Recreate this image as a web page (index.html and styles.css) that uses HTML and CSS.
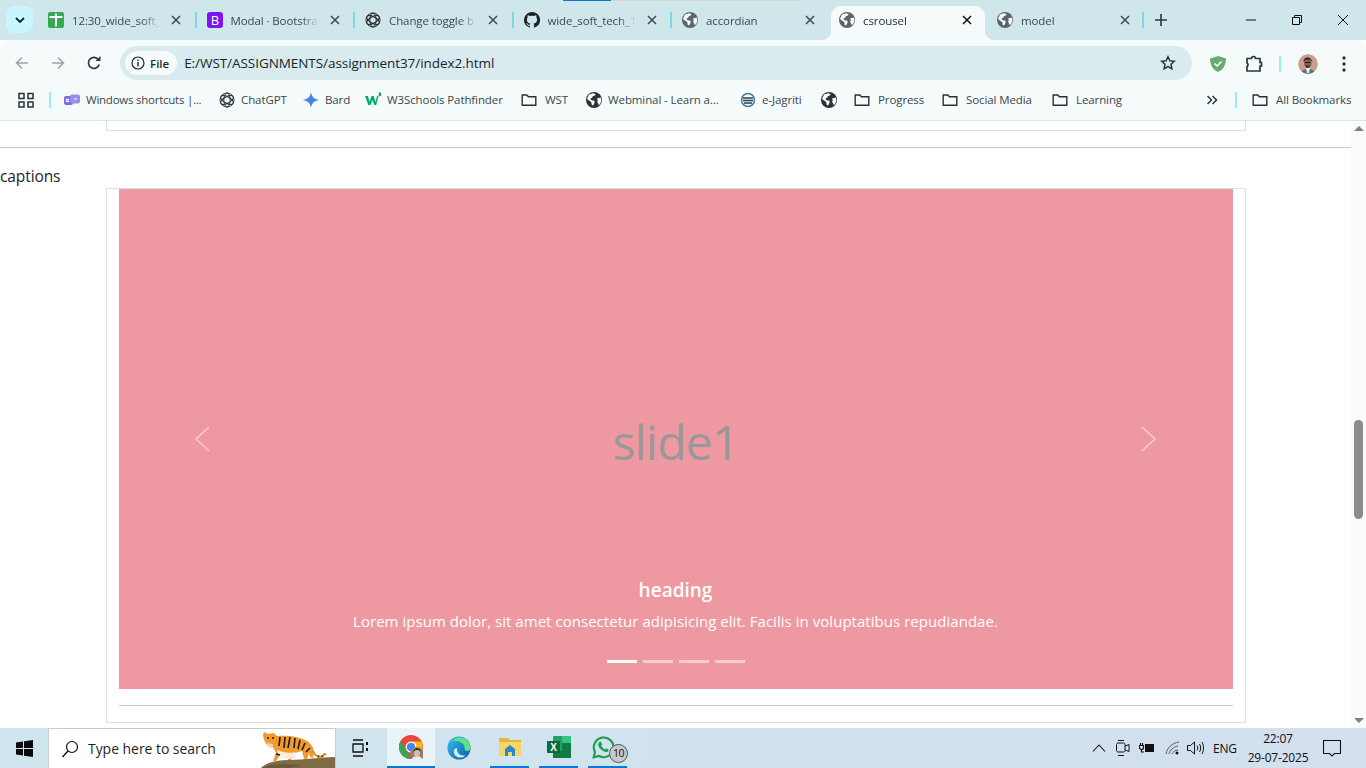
FILE: index.html
```html
<!DOCTYPE html>
<html lang="en">
<head>
<meta charset="utf-8">
<title>csrousel</title>
<link rel="stylesheet" href="styles.css">
</head>
<body>
<svg class="defs" width="0" height="0" aria-hidden="true">
  <symbol id="globe" viewBox="0 0 16 16"><circle cx="8" cy="8" r="8" fill="currentColor"/><path fill="#f5fbfb" d="M3 2.600 7 1.200l2.600.8-.8 1.600-2 .6-.6 1.600-1.400.4-.2 1.400 1.800 1 1.600-.2.8 1.400-.8 2.200-1 1.400-1.200-.4-.6-3L2.200 8 1 6.800zM11 6.600l3.800-1 .6 3-1 3-1.600 1.600-.8-2-1-1.400.8-1.200z"/></symbol>
  <symbol id="folder" viewBox="0 0 16 16"><path fill="none" stroke="currentColor" stroke-width="1.400" d="M1.200 3h4.600l1.600 1.800h7.400v8.400H1.200z"/></symbol>
  <symbol id="gpt" viewBox="0 0 16 16"><g fill="none" stroke="currentColor"><ellipse cx="8" cy="8" rx="3.200" ry="7"/><ellipse cx="8" cy="8" rx="3.200" ry="7" transform="rotate(60 8 8)"/><ellipse cx="8" cy="8" rx="3.200" ry="7" transform="rotate(120 8 8)"/><circle cx="8" cy="8" r="7"/></g></symbol>
  <symbol id="x" viewBox="0 0 10 10"><path stroke="currentColor" stroke-width="1.500" d="M1 1l8 8M9 1l-8 8"/></symbol>
</svg>

<header class="tabstrip">
  <span class="progress"></span>
  <button class="tab-search"><svg width="10" height="6" viewBox="0 0 10 6"><path fill="none" stroke="#10242b" stroke-width="1.800" d="M1 1l4 4 4-4"/></svg></button>
  <div class="tabs">
    <div class="tab"><svg class="fav" viewBox="0 0 16 16"><rect width="16" height="16" rx="2" fill="#34a853"/><path fill="#fff" d="M7 1.500h2V4h5.500v2H9v8.500H7V6H1.500V4H7z"/></svg><span class="tab-title">12:30_wide_soft_</span><svg class="close"><use href="#x"/></svg></div>
    <div class="tab"><svg class="fav" viewBox="0 0 16 16"><rect width="16" height="16" rx="3" fill="#7a14f0"/><text x="8" y="12.800" class="b-letter">B</text></svg><span class="tab-title">Modal · Bootstra</span><svg class="close"><use href="#x"/></svg></div>
    <div class="tab"><svg class="fav dark"><use href="#gpt"/></svg><span class="tab-title">Change toggle b</span><svg class="close"><use href="#x"/></svg></div>
    <div class="tab"><svg class="fav" viewBox="0 0 16 16"><path fill="#1f2328" d="M8 0a8 8 0 0 0-2.500 15.600c.4.100.5-.2.5-.4v-1.400c-2.200.5-2.700-1-2.700-1-.4-.9-.9-1.200-.9-1.200-.7-.5 0-.5 0-.5.8.1 1.200.8 1.200.8.7 1.200 1.900.9 2.400.7.1-.5.3-.9.5-1.100-1.800-.2-3.600-.9-3.600-4 0-.9.3-1.600.8-2.100-.1-.2-.4-1 .1-2.100 0 0 .7-.2 2.200.8a7.600 7.600 0 0 1 4 0c1.500-1 2.200-.8 2.200-.8.400 1.100.2 1.900.1 2.100.5.600.8 1.300.8 2.100 0 3.100-1.900 3.800-3.700 4 .3.300.6.800.6 1.500v2.200c0 .2.100.5.600.4A8 8 0 0 0 8 0z"/></svg><span class="tab-title">wide_soft_tech_1</span><svg class="close"><use href="#x"/></svg></div>
    <div class="tab last-before-active"><svg class="fav grey"><use href="#globe"/></svg><span class="tab-title">accordian</span><svg class="close"><use href="#x"/></svg></div>
    <div class="tab active"><svg class="fav grey"><use href="#globe"/></svg><span class="tab-title">csrousel</span><svg class="close"><use href="#x"/></svg></div>
    <div class="tab after-active"><svg class="fav grey"><use href="#globe"/></svg><span class="tab-title">model</span><svg class="close"><use href="#x"/></svg></div>
  </div>
  <button class="new-tab"><svg width="12" height="12" viewBox="0 0 12 12"><path stroke="#26383e" stroke-width="1.600" d="M6 0v12M0 6h12"/></svg></button>
  <div class="win-controls">
    <svg width="12" height="12" viewBox="0 0 12 12"><path stroke="#111" d="M1 6h10"/></svg>
    <svg width="12" height="12" viewBox="0 0 12 12"><path fill="none" stroke="#111" d="M1.500 3.500h7v7h-7zM3.500 3.500v-2h7v7h-2"/></svg>
    <svg width="12" height="12" viewBox="0 0 12 12"><path stroke="#111" d="M1 1l10 10M11 1L1 11"/></svg>
  </div>
</header>

<div class="toolbar">
  <div class="nav">
    <svg width="16" height="16" viewBox="0 0 16 16"><path fill="none" stroke="#9aa5a8" stroke-width="1.600" d="M14 8H2.500M8 2.500 2.500 8 8 13.500"/></svg>
    <svg width="16" height="16" viewBox="0 0 16 16"><path fill="none" stroke="#9aa5a8" stroke-width="1.600" d="M2 8h11.500M8 2.500 13.500 8 8 13.500"/></svg>
    <svg width="16" height="16" viewBox="0 0 16 16"><path fill="none" stroke="#26383e" stroke-width="1.700" d="M13.200 9.500A5.500 5.500 0 1 1 12 4.200"/><path fill="#26383e" d="M9.500 6h5V1z"/></svg>
  </div>
  <div class="omnibox">
    <span class="chip"><svg width="14" height="14" viewBox="0 0 14 14"><circle cx="7" cy="7" r="6" fill="none" stroke="#1b2c31" stroke-width="1.200"/><path stroke="#1b2c31" stroke-width="1.400" d="M7 6v4.500M7 3.500v1.400"/></svg>File</span>
    <span class="url">E:/WST/ASSIGNMENTS/assignment37/index2.html</span>
    <svg class="star" width="16" height="16" viewBox="0 0 16 16"><path fill="none" stroke="#26383e" stroke-width="1.500" d="M8 1.800l1.900 4 4.400.5-3.300 3 .9 4.400L8 11.500l-3.900 2.200.9-4.400-3.300-3 4.400-.5z"/></svg>
  </div>
  <div class="extras">
    <svg width="16" height="18" viewBox="0 0 16 18"><path fill="#68ad6f" d="M8 1l8 2.500C16 10 13 15 8 17 3 15 0 10 0 3.500z"/><path fill="none" stroke="#fff" stroke-width="1.600" d="M4.500 8.500 7.200 11l4.300-4.500"/></svg>
    <svg width="18" height="18" viewBox="0 0 18 18"><path fill="none" stroke="#26383e" stroke-width="1.700" d="M2 3.500h4.500a2 2 0 0 1 4 0H15v4h1.500v3.500H15v5H2v-4.500a2 2 0 0 0 0-3.500z"/></svg>
    <span class="vsep"></span>
    <span class="avatar"><svg width="20" height="20" viewBox="0 0 20 20"><circle cx="10" cy="10" r="10" fill="#c9a08c"/><path fill="#5d7480" d="M3 18c2-4 12-4 14 0l-3 3H6z"/><path fill="#e8edf0" d="M8 14h4l-1 5H9z"/><ellipse cx="9.800" cy="9" rx="3.800" ry="4.800" fill="#84624c"/><path fill="#2a221d" d="M5.500 8c-.5-6 8.500-6 8.800 0L12.500 5.500H7.500z"/><path stroke="#1d1a18" d="M7 8.500h5.500"/><path fill="#3b2c24" d="M7.500 11.500h4.500l-1 2.200H8.500z"/></svg></span>
    <svg width="4" height="16" viewBox="0 0 4 16"><g fill="#26383e"><circle cx="2" cy="2" r="1.700"/><circle cx="2" cy="8" r="1.700"/><circle cx="2" cy="14" r="1.700"/></g></svg>
  </div>
</div>

<nav class="bookmarks">
  <span class="bm"><svg class="ic dark" viewBox="0 0 16 16"><path fill="none" stroke="currentColor" stroke-width="1.500" d="M1 1.500h5v5H1zM10 1.500h5v5h-5zM1 10h5v5H1zM10 10h5v5h-5z"/></svg></span>
  <span class="vsep"></span>
  <span class="bm tight"><svg class="ic" viewBox="0 0 16 16"><rect x="0" y="4" width="9" height="9" rx="2" fill="#7d6be0"/><rect x="6" y="2.500" width="10" height="9" rx="2" fill="#9a8bec"/><path stroke="#fff" stroke-width="1.200" d="M2 7l3 3M5 7l-3 3M10 7h3"/></svg>Windows shortcuts |...</span>
  <span class="bm"><svg class="ic dark"><use href="#gpt"/></svg>ChatGPT</span>
  <span class="bm"><svg class="ic" viewBox="0 0 16 16"><path fill="#4a82e8" d="M8 0c.6 4.500 3 7.200 8 8-5 .8-7.400 3.500-8 8-.6-4.500-3-7.200-8-8 5-.8 7.400-3.500 8-8z"/></svg>Bard</span>
  <span class="bm"><svg class="ic" viewBox="0 0 16 16"><path fill="#04aa6d" d="M0 4h3l1.500 6L6.500 4h2.200l1.800 6L12 4h1.500l-2.300 9H9.300L7.500 8l-1.900 5H3.300z"/><path fill="none" stroke="#0a7a50" d="M13.500 1h2v1.200h-1.500M15.500 2.200v1.500h-2"/></svg>W3Schools Pathfinder</span>
  <span class="bm gap8"><svg class="ic dark"><use href="#folder"/></svg>WST</span>
  <span class="bm"><svg class="ic dark"><use href="#globe"/></svg>Webminal - Learn a...</span>
  <span class="bm"><svg class="ic" viewBox="0 0 16 16"><circle cx="8" cy="8" r="6.500" fill="none" stroke="#4a7c9c" stroke-width="1.500"/><path stroke="#2d3e50" stroke-width="1.300" d="M3 6h10M3 8.500h10M4 11h8"/></svg>e-Jagriti</span>
  <span class="bm"><svg class="ic dark"><use href="#globe"/></svg></span>
  <span class="bm gap8"><svg class="ic dark"><use href="#folder"/></svg>Progress</span>
  <span class="bm gap8"><svg class="ic dark"><use href="#folder"/></svg>Social Media</span>
  <span class="bm gap8"><svg class="ic dark"><use href="#folder"/></svg>Learning</span>
  <span class="bm chev"><svg width="12" height="10" viewBox="0 0 12 10"><path fill="none" stroke="#26383e" stroke-width="1.500" d="M1.500 1l4 4-4 4M6.500 1l4 4-4 4"/></svg></span>
  <span class="vsep"></span>
  <span class="bm gap8"><svg class="ic dark"><use href="#folder"/></svg>All Bookmarks</span>
</nav>

<div class="viewport">
  <main class="page">
    <div class="container stub"></div>
    <hr class="rule">
    <p class="label">captions</p>
    <section class="container card">
      <div class="carousel">
        <div class="slide">slide1</div>
        <span class="control prev"><svg width="16" height="26" viewBox="0 0 16 26"><path fill="none" stroke="#fff" stroke-width="1.600" d="M15 1 2 13l13 12"/></svg></span>
        <span class="control next"><svg width="16" height="26" viewBox="0 0 16 26"><path fill="none" stroke="#fff" stroke-width="1.600" d="M1 1l13 12L1 25"/></svg></span>
        <div class="caption">
          <h5>heading</h5>
          <p>Lorem ipsum dolor, sit amet consectetur adipisicing elit. Facilis in voluptatibus repudiandae.</p>
        </div>
        <div class="indicators"><span class="on"></span><span></span><span></span><span></span></div>
      </div>
      <hr class="rule inner">
    </section>
  </main>
  <aside class="scrollbar">
    <span class="arrow up"></span>
    <span class="thumb"></span>
    <span class="arrow down"></span>
  </aside>
</div>

<footer class="taskbar">
  <span class="start"><svg width="17" height="17" viewBox="0 0 17 17"><path fill="#0b0b0b" d="M0 2.400 7 1.400V8H0zM8 1.300 17 0v8H8zM0 9h7v6.600l-7-1zM8 9h9v8l-9-1.300z"/></svg></span>
  <div class="search">
    <svg width="18" height="18" viewBox="0 0 18 18"><circle cx="11" cy="7" r="5.500" fill="none" stroke="#111" stroke-width="1.200"/><path stroke="#111" stroke-width="1.400" d="M7 11l-5.500 6"/></svg>
    <span class="search-text">Type here to search</span>
    <svg class="tiger" width="80" height="38" viewBox="0 0 80 38"><path fill="#7d6b45" d="M5 38c6-6 16-8 28-8 16 0 32-3 47-3v11z"/><path fill="#6a5a3a" d="M5 38c12-5 24-4 40-3l-10 3z"/><path fill="#f09a2f" d="M8 2l4 2 6-1 3 3c9-1 19 0 26 3 6 2 10 7 11 12l-1 7-3-1-1-4-2 6h-3l-2-8-7 2-4 7-3 0 0-6-6-1-6 8h-3l3-8-2-4-2-3-5-1-3-5-1-5z"/><path fill="#fbeede" d="M21 20c5 2 12 4 18 2l1 6-9 1-8-2z"/><path fill="#e8d8b0" d="M11 13l6 1-1 4-4-1z"/><path fill="none" stroke="#1f1812" stroke-width="1.600" d="M24 7l-1 9M29 7l-1 11M34 7l-2 11M39 8l-1 10M44 10l-2 9M49 13l-3 7M54 18l-4 4M20 24l4 1"/><circle cx="12" cy="8" r="1" fill="#222"/><circle cx="17" cy="8" r="1" fill="#222"/><path fill="none" stroke="#e08a26" stroke-width="2" d="M57 21c2 5 7 8 10 5 1-2 2-3 3-1"/><path fill="none" stroke="#1f1812" d="M62 27l1-2M66 27l0-2"/></svg>
  </div>
  <span class="task-btn taskview"><svg width="18" height="18" viewBox="0 0 18 18"><path fill="none" stroke="#111" stroke-width="1.300" d="M2 1h10M2 17h10M2 5h10v8H2z"/><path fill="#111" d="M15 3h2v3h-2zM15 9h2v3h-2z"/></svg></span>
  <span class="task-btn active"><svg width="24" height="24" viewBox="0 0 24 24"><circle cx="12" cy="12" r="12" fill="#e8453c"/><path fill="#34a853" d="M12 24A12 12 0 0 1 1.600 6L7 15.500l5 8.500z"/><path fill="#fbbc05" d="M12 6.500h10.400A12 12 0 0 1 12 24l5-8.500z"/><circle cx="12" cy="12" r="5.500" fill="#fff"/><circle cx="12" cy="12" r="4.300" fill="#4285f4"/><circle cx="18" cy="19" r="7" fill="#8b8178"/><path fill="#f0ebe4" d="M13 24c1-4 9-4 10 0z"/><ellipse cx="18" cy="18" rx="3" ry="3.800" fill="#d8bda2"/><path fill="#2c2520" d="M14.500 17c0-5 7-5 7 0l-2-2h-3z"/></svg></span>
  <span class="task-btn edge"><svg width="24" height="24" viewBox="0 0 26 26"><defs><linearGradient id="edge" x1="0" y1="0" x2="1" y2="1"><stop offset="0" stop-color="#35c1f1"/><stop offset="1" stop-color="#0c59a4"/></linearGradient></defs><circle cx="13" cy="13" r="12.500" fill="url(#edge)"/><path fill="#5fe08b" d="M5 6c6-7 18-6 20.500 6 .6 3-2 5-5 4-2-.5-1-3-2-6C16 6 9 4 5 6z"/><path fill="#d2eef5" d="M11 13c-1 5 3 9 9 8-3 3-8 3-10 1-4-3-3-9 1-9z"/></svg></span>
  <span class="task-btn pinned first-pin"><svg width="24" height="24" viewBox="0 0 24 24"><path fill="#e9b53a" d="M1 3h9l2 2h11v16H1z"/><path fill="#f8d568" d="M1 7h22v14H1z"/><path fill="#2d86c9" d="M7 14l5-4 5 4v7h-3v-4h-4v4H7z"/></svg></span>
  <span class="task-btn pinned"><svg width="24" height="24" viewBox="0 0 24 24"><rect x="6" y="1" width="18" height="22" rx="1" fill="#21a366"/><path fill="#107c41" d="M15 8h9v8h-9zM6 16h18v7H6z"/><path fill="#33c481" d="M15 1h8a1 1 0 0 1 1 1v6h-9z"/><rect x="0" y="6" width="13" height="12" rx="1" fill="#0e6b39"/><text x="6.500" y="15.500" class="x-letter">X</text></svg></span>
  <span class="task-btn pinned wa"><svg width="25" height="25" viewBox="0 0 28 28"><path fill="none" stroke="#1f9e52" stroke-width="2.400" d="M3 25l1.500-6A11 11 0 1 1 9 23.500z"/><path fill="#1f9e52" d="M9 8c1-1 2-1 2.500 0l1 2.500-1 1.500c1 2 2.500 3 4 4l1.500-1 2.500 1c.5 1 0 2.500-1.500 3-4 1-10-5-10-8 0-1 .5-2.500 1-3z"/></svg><span class="badge">10</span></span>
  <div class="tray">
    <svg width="14" height="8" viewBox="0 0 14 8"><path fill="none" stroke="#111" stroke-width="1.100" d="M1 7.500 7 1l6 6.500"/></svg>
    <svg width="14" height="18" viewBox="0 0 14 18"><path fill="none" stroke="#111" d="M.5 5.500c0-1 1-1.500 1.500-1.500h5.500c1 0 1.500.5 1.500 1.500v6c0 1-.5 1.500-1.500 1.500H2c-.5 0-1.500-.5-1.500-1.500zM9 7l4-1.500v7L9 11M2 1.500h6M2 16.500h6"/></svg>
    <svg width="16" height="12" viewBox="0 0 16 12"><path fill="#111" d="M6 2h9v8H6z"/><path fill="none" stroke="#111" stroke-width="1.200" d="M0 3.500h4.500v2a2 2 0 0 1-4 0zM1.500 1v2.500M3.500 1v2.500M2.500 7.500V10H5"/></svg>
    <svg width="15" height="14" viewBox="0 0 15 14"><g fill="none" stroke="#555"><path d="M1 13C2 7 7 2 14 1"/><path d="M4 13c1-4 4-7 9-8"/><path d="M7 13c1-2 3-4 6-4"/></g><circle cx="12" cy="12" r="1.500" fill="#111"/></svg>
    <svg width="17" height="14" viewBox="0 0 17 14"><path fill="none" stroke="#111" d="M.5 4.500h3L7.500 1v12l-4-3.500h-3zM10 4.500c1 1.500 1 3.500 0 5M12.500 3c1.500 2.500 1.500 5.500 0 8M15 1c2 3.500 2 8.500 0 12"/></svg>
    <span class="lang">ENG</span>
    <span class="clock"><span>22:07</span><span>29-07-2025</span></span>
    <svg class="notify" width="18" height="17" viewBox="0 0 18 17"><path fill="none" stroke="#111" stroke-width="1.100" d="M.5.500h17v13H11.500L9 16l-2.500-2.500H.5z"/></svg>
  </div>
</footer>
</body>
</html>
```

FILE: styles.css
```css
* { box-sizing: border-box; }
html, body { margin: 0; height: 768px; overflow: hidden; }
body {
  display: flex; flex-direction: column; width: 1366px;
  font-family: "Open Sans", "Noto Sans", "Liberation Sans", sans-serif;
  color: #212529; background: #fff;
}
.defs { position: absolute; }
button { border: 0; padding: 0; background: none; display: flex; align-items: center; justify-content: center; }

/* Tab strip */
.tabstrip { height: 40px; flex: none; background: #cfe6ea; display: flex; position: relative; padding-left: 6px; }
.progress { position: absolute; left: 563px; top: 0; width: 241px; height: 1px; background: linear-gradient(90deg, #0a78d6 20%, #d8d8d8 20%); }
.tab-search { width: 27px; height: 27px; margin-top: 6px; background: #c8f6fe; border-radius: 8px; flex: none; }
.tabs { display: flex; margin-left: 5px; }
.tab { width: 158.500px; height: 34px; margin-top: 6px; display: flex; align-items: center; padding: 0 0 6px 10px; position: relative; font-size: 11.500px; color: #3c4a4e; letter-spacing: -.1px; flex: none; }
.tab::after { content: ""; position: absolute; right: 0; top: 6px; height: 16px; width: 2px; background: #7fd6e4; }
.fav { width: 16px; height: 16px; flex: none; margin-right: 8px; }
.fav.dark { color: #26282a; }
.fav.grey { color: #5f6368; }
.tab-title { width: 88px; white-space: nowrap; -webkit-mask-image: linear-gradient(90deg, #000 80%, transparent); mask-image: linear-gradient(90deg, #000 80%, transparent); }
.close { width: 10px; height: 10px; margin-left: 11px; color: #3c4a4e; flex: none; }
.tab.last-before-active::after, .tab.active::after { display: none; }
.tab.active { background: #f5fbfb; color: #1a2a2e; border-radius: 10px 10px 0 0; width: 154.500px; padding-left: 8.500px; z-index: 1; }
.tab.active .close { color: #111; }
.tab.active::before { content: ""; position: absolute; left: -10px; bottom: 0; width: 10px; height: 10px; background: radial-gradient(circle at 0 0, transparent 10px, #f5fbfb 10.500px); }
.tab.after-active { width: 159px; padding-left: 12px; }
.tab.after-active::before { content: ""; position: absolute; left: 0; bottom: 0; width: 10px; height: 10px; background: radial-gradient(circle at 100% 0, transparent 10px, #f5fbfb 10.500px); }
.b-letter { font: 400 13px "Open Sans", sans-serif; fill: #fff; text-anchor: middle; }
.new-tab { width: 12px; height: 12px; margin: 14px 0 0 11px; }
.win-controls { margin-left: auto; display: flex; gap: 34px; padding: 14px 17px 0 0; align-items: flex-start; }

/* Toolbar */
.toolbar { height: 40px; flex: none; background: #f5fbfb; border-radius: 10px 10px 0 0; display: flex; align-items: flex-start; }
.nav { display: flex; gap: 20px; padding: 15px 0 0 14px; width: 120px; flex: none; }
.omnibox { width: 1072px; height: 34px; margin-top: 6px; background: #d9ebee; border-radius: 17px; display: flex; align-items: center; padding: 0 16px 0 5px; font-size: 13px; }
.chip { display: flex; align-items: center; gap: 5px; height: 24px; padding: 0 8px 0 6px; border-radius: 12px; background: #f5fbfb; font-weight: 600; font-size: 11.500px; color: #1b2c31; }
.url { margin-left: 7px; color: #15262b; font-size: 13.500px; letter-spacing: -.06px; }
.star { margin-left: auto; }
.extras { display: flex; align-items: center; padding: 14px 0 0 18px; flex: 1; }
.extras > svg:nth-child(2) { margin-left: 19px; }
.extras .vsep { margin: 0 17px 0 16px; }
.extras > svg:last-child { margin-left: 24px; }
.avatar { width: 20px; height: 20px; display: block; border-radius: 50%; overflow: hidden; }
.avatar svg { display: block; }
.vsep { display: block; width: 2px; height: 16px; background: #9beafa; }

/* Bookmarks */
.bookmarks {
  height: 41px; flex: none; background: #f5fbfb; border-bottom: 1px solid #dde3e6;
  display: grid; align-items: center; padding-left: 18px; padding-bottom: 1px;
  grid-template-columns: 31px 15px 155px 84px 62px 156px 65px 154px 81px 33px 88px 110px 153px 30px 17px auto;
  font-size: 11.500px; color: #39474b; letter-spacing: -.1px; white-space: nowrap;
}
.bm { display: flex; align-items: center; gap: 6px; }
.bm.gap8 { gap: 8px; }
.bm.tight { letter-spacing: -.24px; }
.ic { width: 16px; height: 16px; flex: none; }
.ic.dark { color: #2a3236; }
.chev { padding-left: 1px; }

/* Page */
.viewport { flex: 1; display: flex; min-height: 0; }
.page { flex: 1; min-width: 0; }
.container { width: 1140px; margin: 0 auto; border: 1px solid #dee2e6; padding: 0 12px; }
.stub { height: 10px; border-top: 0; }
.rule { margin: 16px 0; border: 0; border-top: 1px solid #c8c8c8; }
.label { margin: 0; font-size: 15.500px; line-height: 24px; letter-spacing: -.1px; }
.card { border-bottom: 1px solid #dee2e6; }
.carousel { height: 500px; position: relative; background: #ee98a1; color: #fff; }
.slide { height: 100%; display: flex; align-items: center; justify-content: center; font-size: 48px; color: #9a979b; font-weight: 400; padding-top: 5px; letter-spacing: -.8px; }
.control { position: absolute; top: 0; bottom: 0; width: 167px; display: flex; align-items: center; justify-content: center; opacity: .5; }
.prev { left: 0; }
.next { right: 0; }
.caption { position: absolute; left: 167px; right: 167px; bottom: 20px; padding: 20px 0; text-align: center; }
.caption h5 { margin: 0 0 7px; font-size: 19px; line-height: 24px; font-weight: 600; }
.caption p { margin: 0 0 16px; font-size: 15px; line-height: 24px; letter-spacing: .04px; white-space: nowrap; }
.indicators { position: absolute; left: 0; right: 0; bottom: 26px; display: flex; justify-content: center; gap: 6px; }
.indicators span { width: 30px; height: 3px; background: #fff; opacity: .5; }
.indicators .on { opacity: 1; }

/* Scrollbar */
.scrollbar { width: 15px; flex: none; background: #fbfbfb; display: flex; flex-direction: column; align-items: center; }
.thumb { width: 9px; height: 99px; margin-top: 289px; background: #8c8c8c; border-radius: 5px; }
.arrow { width: 0; height: 0; border-left: 5px solid transparent; border-right: 5px solid transparent; }
.arrow.up { border-bottom: 5px solid #808080; margin-top: 5px; }
.arrow.down { border-top: 5px solid #808080; margin-top: auto; margin-bottom: 5px; }

/* Taskbar */
.taskbar { height: 40px; flex: none; background: linear-gradient(90deg, #cfe6ee, #d3dfee); display: flex; align-items: stretch; }
.start { width: 48px; display: flex; align-items: center; justify-content: center; }
.search { width: 288px; background: #fff; border: 1px solid #c7ccce; border-bottom: 0; display: flex; align-items: center; padding-left: 12px; position: relative; font-size: 14px; color: #1f1f1f; overflow: hidden; }
.search-text { margin-left: 9px; letter-spacing: -.05px; }
.tiger { position: absolute; right: -1px; bottom: 0; }
.task-btn { width: 48px; display: flex; align-items: center; justify-content: center; position: relative; }
.taskview { width: 51px; padding-right: 4px; }
.task-btn.active { background: #e8f3f7; border-bottom: 2px solid #0a78d6; margin-right: 1px; }
.edge { padding-right: 2px; }
.pinned { width: 39px; margin-left: 10px; border-bottom: 2px solid #0a78d6; }
.pinned.first-pin { margin-left: 6px; }
.wa { padding-right: 8px; }
.x-letter { font: 700 10px "Liberation Sans", sans-serif; fill: #fff; text-anchor: middle; }
.badge { position: absolute; right: -1px; bottom: 3px; width: 19px; height: 19px; border-radius: 50%; background: #c9c9c9; border: 1px solid #555; font-size: 10.500px; line-height: 17px; text-align: center; color: #111; letter-spacing: -.5px; }
.tray { margin-left: auto; display: flex; align-items: center; color: #111; font-size: 12px; }
.tray > svg:nth-child(1) { margin-right: 10px; }
.tray > svg:nth-child(2) { margin-right: 9px; }
.tray > svg:nth-child(3) { margin-right: 10px; }
.tray > svg:nth-child(4) { margin-right: 7px; }
.lang { margin-left: 9px; width: 27px; letter-spacing: -.2px; }
.clock { display: flex; flex-direction: column; align-items: center; width: 74px; margin-left: 1px; line-height: 19px; letter-spacing: -.2px; }
.notify { margin: 0 25px 0 8px; }
```
